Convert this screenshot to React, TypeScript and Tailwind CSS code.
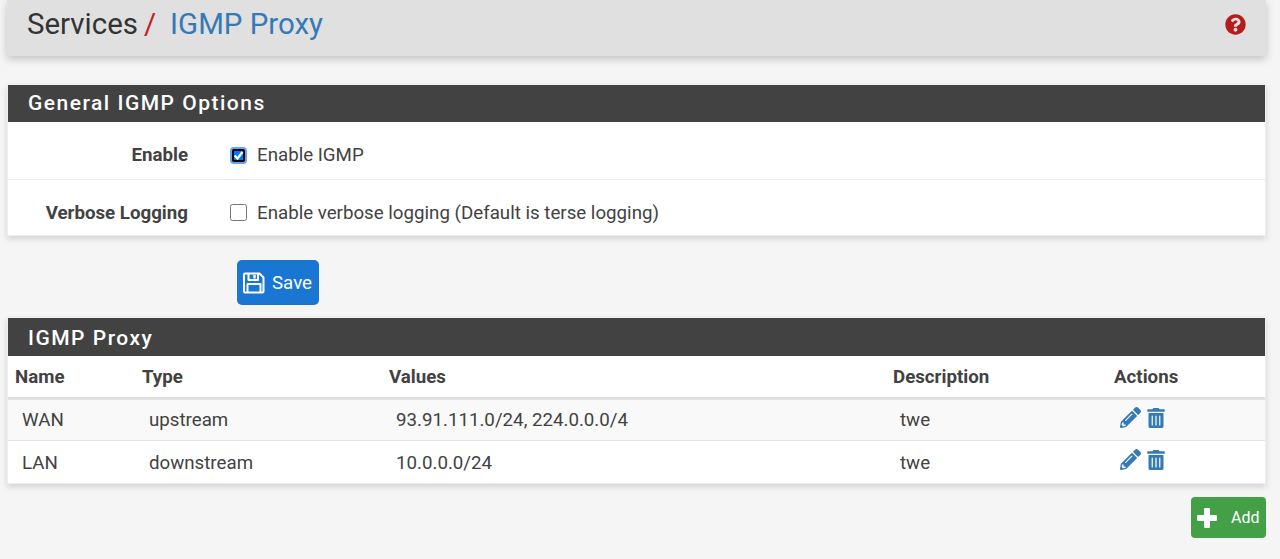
import React from "react";
import { FaPencilAlt, FaQuestionCircle, FaTrashAlt } from "react-icons/fa";

const rows = [
  { name: "WAN", type: "upstream", values: "93.91.111.0/24, 224.0.0.0/4", desc: "twe", bg: "bg-[#f9f9f9]", h: "h-[42px]" },
  { name: "LAN", type: "downstream", values: "10.0.0.0/24", desc: "twe", bg: "bg-white", h: "h-[43px]" },
];

function SaveIcon() {
  return (
    <svg width="22" height="22" viewBox="0 0 22 22" fill="none" stroke="white" strokeWidth="2" strokeLinejoin="round">
      <path d="M2 1.5h14.5l4 4v14a1 1 0 0 1-1 1h-17.5a1 1 0 0 1-1-1v-17a1 1 0 0 1 1-1z" />
      <path d="M5.5 1.5v6.5h9.5v-6.5" />
      <path d="M11.5 3v3.5" strokeWidth="2.4" />
      <path d="M4.5 20.5v-8.5h13v8.5" />
    </svg>
  );
}

function PlusIcon() {
  return (
    <svg width="20" height="20" viewBox="0 0 20 20" fill="white">
      <rect x="7" y="0" width="6" height="20" rx="1.2" />
      <rect x="0" y="7" width="20" height="6" rx="1.2" />
    </svg>
  );
}

export default function App() {
  return (
    <div className="h-[559px] overflow-hidden bg-[#f5f5f5] px-[7px] font-['Roboto',sans-serif] text-[18.72px] text-[#424242]">
      <div className="w-[1259px]">
        <div className="h-[56px] bg-[#e0e0e0] rounded-b-[3px] shadow-[0_3px_8px_rgba(0,0,0,0.22)] pl-[20px] pr-[20px] pb-[8px] flex items-center justify-between">
          <div className="text-[29.44px] leading-[50px] flex">
            <span className="text-[#333333]">Services</span>
            <span className="text-[#c71c22] ml-[6px]">/</span>
            <span className="text-[#337ab7] ml-[14px]">IGMP Proxy</span>
          </div>
          <FaQuestionCircle className="text-[#b71c1c] text-[21px]" />
        </div>

        <div className="mt-[28px] bg-white border border-[#eeeeee] shadow-[0_3px_6px_rgba(0,0,0,0.14)]">
          <div className="h-[37px] bg-[#424242] pl-[20px] flex items-center text-[21px] font-medium tracking-[1.5px] text-white">
            General IGMP Options
          </div>
          <div className="h-[58px] pt-[10px] flex items-center border-b border-[#e8e8e8]">
            <div className="w-[180px] text-right font-bold">Enable</div>
            <span className="relative ml-[42px] flex h-[17px] w-[17px] items-center justify-center rounded-[4px] bg-[#63a4f5]">
              <input
                type="checkbox"
                defaultChecked
                className="h-[13px] w-[13px] m-0 appearance-none rounded-[2px] border-[2px] border-black bg-[#0075ff]"
              />
              <svg width="13" height="13" viewBox="0 0 13 13" fill="none" stroke="white" strokeWidth="2.4" className="absolute left-[2px] top-[2px]">
                <path d="M2.5 6.5l3 3 5-6.5" />
              </svg>
            </span>
            <span className="ml-[10px]">Enable IGMP</span>
          </div>
          <div className="h-[55px] pt-[9px] flex items-center">
            <div className="w-[180px] text-right font-bold pt-[2px]">Verbose Logging</div>
            <input type="checkbox" className="ml-[42px] w-[17px] h-[17px] m-0" />
            <span className="ml-[10px] pt-[2px]">Enable verbose logging (Default is terse logging)</span>
          </div>
        </div>

        <div className="mt-[24px] pl-[230px]">
          <button className="h-[45px] w-[82px] rounded-[5px] bg-[#1976d2] text-white flex items-center pl-[6px] text-[18.72px]">
            <SaveIcon />
            <span className="ml-[7px] pt-[2px]">Save</span>
          </button>
        </div>

        <div className="mt-[12px] bg-white border border-[#eeeeee] shadow-[0_3px_6px_rgba(0,0,0,0.14)]">
          <div className="h-[38px] bg-[#424242] pl-[20px] pt-[3px] flex items-center text-[21px] font-medium tracking-[1.5px] text-white">
            IGMP Proxy
          </div>
          <table className="w-full table-fixed border-collapse">
            <colgroup>
              <col className="w-[127px]" />
              <col className="w-[247px]" />
              <col className="w-[504px]" />
              <col className="w-[221px]" />
              <col />
            </colgroup>
            <thead>
              <tr className="h-[42px] border-b-[3px] border-[#e0e0e0]">
                {["Name", "Type", "Values", "Description", "Actions"].map((h) => (
                  <th key={h} className="text-left font-bold pl-[7px] pt-[2px]">{h}</th>
                ))}
              </tr>
            </thead>
            <tbody>
              {rows.map((r) => (
                <tr key={r.name} className={`${r.bg} ${r.h} border-b border-[#e5e5e5] last:border-b-0`}>
                  <td className="pl-[14px] pt-[2px]">{r.name}</td>
                  <td className="pl-[14px] pt-[2px]">{r.type}</td>
                  <td className="pl-[14px] pt-[2px]">{r.values}</td>
                  <td className="pl-[14px] pt-[2px]">{r.desc}</td>
                  <td className="pl-[13px]">
                    <div className="flex items-center text-[#337ab7] mt-[-4px] gap-[5px]">
                      <FaPencilAlt className="text-[21px]" />
                      <FaTrashAlt className="text-[20px]" />
                    </div>
                  </td>
                </tr>
              ))}
            </tbody>
          </table>
        </div>

        <div className="mt-[13px] flex justify-end">
          <button className="h-[41px] w-[75px] rounded-[4px] bg-[#43a047] text-white flex items-center pl-[6px] text-[16px]">
            <PlusIcon />
            <span className="ml-[14px]">Add</span>
          </button>
        </div>
      </div>
    </div>
  );
}
